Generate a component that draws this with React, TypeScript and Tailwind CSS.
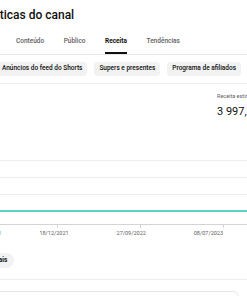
const tabs = ["Visão geral", "Conteúdo", "Público", "Receita", "Tendências"];
const chips = ["Anúncios do feed do Shorts", "Supers e presentes", "Programa de afiliados"];
const dates = ["18/12/2021", "27/09/2022", "08/07/2023"];

const RevenueChart = () => (
  <svg width="247" height="111" viewBox="0 0 247 111" className="block">
    {[42.5, 59.5, 76.5].map((y) => (
      <line key={y} x1="0" x2="247" y1={y} y2={y} stroke="#ececec" strokeWidth="1" />
    ))}
    <line x1="0" x2="247" y1="93" y2="93" stroke="#5dd2c4" strokeWidth="2" />
    <line x1="0" x2="247" y1="106.5" y2="106.5" stroke="#d4d4d4" strokeWidth="1" />
    {[57.5, 140.5, 223.5].map((x) => (
      <line key={x} x1={x} x2={x} y1="106" y2="110" stroke="#d4d4d4" strokeWidth="1" />
    ))}
  </svg>
);

const App = () => {
  return (
    <div className="w-[247px] h-[296px] overflow-hidden bg-white text-[#0f0f0f] font-['Roboto','Liberation_Sans',sans-serif]">
      <h1 className="mt-[7px] -ml-[37px] text-[12px] leading-[16px] font-medium whitespace-nowrap">
        Estatísticas do canal
      </h1>

      {/* first tab is pushed off the left edge, like the crop in the screenshot */}
      <div className="mt-[8px] h-[24px] border-b border-[#e5e5e5] flex items-end gap-[19.5px] -ml-[40px] whitespace-nowrap">
        {tabs.map((tab, i) => (
          <div
            key={tab}
            className={
              tab === "Receita"
                ? "h-[23px] flex items-center border-b-2 border-[#0f0f0f] text-[6.5px] font-bold text-[#0f0f0f]"
                : i === 0
                  ? "h-[23px] mr-[4px] flex items-center border-b-2 border-transparent text-[6.5px] font-medium text-[#606060]"
                  : "h-[23px] flex items-center border-b-2 border-transparent text-[6.5px] font-medium text-[#606060]"
            }
          >
            {tab}
          </div>
        ))}
      </div>

      <div className="pt-[7px] pb-[7px] border-b border-[#ededed] flex gap-[7px] -ml-[3px] whitespace-nowrap">
        {chips.map((chip) => (
          <span
            key={chip}
            className="h-[14px] px-[5px] flex items-center rounded-[4px] bg-[#f2f2f2] text-[6.5px] font-medium"
          >
            {chip}
          </span>
        ))}
      </div>

      <div className="ml-[217px] mt-[9px] whitespace-nowrap">
        <div className="text-[5.5px] leading-[7px] text-[#606060]">Receita estimada</div>
        <div className="mt-[5px] text-[11px] leading-[13px]">3 997,25 US$</div>
      </div>

      <RevenueChart />

      <div className="mt-[1px] flex text-[5.5px] leading-[7px] text-[#606060] whitespace-nowrap">
        <span className="-ml-[28px] w-[29px] text-right">21/03/2021</span>
        <span className="w-[15.5px]" />
        {dates.map((d) => (
          <span key={d} className="w-[83px] text-center">
            {d}
          </span>
        ))}
      </div>

      <div className="mt-[16px] -ml-[14px] flex">
        <span className="h-[15px] px-[7px] flex items-center rounded-full bg-[#f2f2f2] text-[6.5px] font-bold whitespace-nowrap">
          Mais
        </span>
      </div>

      <div className="mt-[11px] border-t border-[#ececec]" />

      <div className="mt-[11px] -ml-[10px] mr-[8px] h-[40px] rounded-[6px] border border-[#e5e5e5]" />
    </div>
  );
};

export default App;
